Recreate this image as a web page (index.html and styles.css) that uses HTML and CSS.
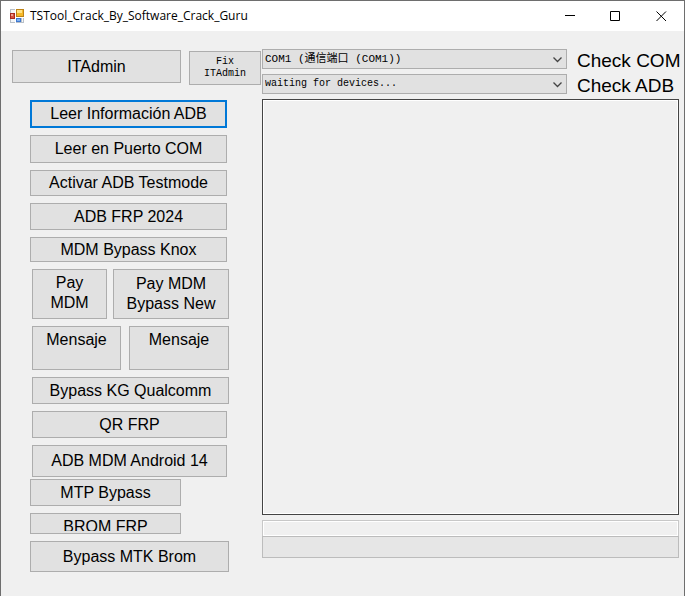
FILE: index.html
```html
<!DOCTYPE html>
<html lang="es">
<head>
<meta charset="utf-8">
<meta name="viewport" content="width=device-width, initial-scale=1">
<title>TSTool_Crack_By_Software_Crack_Guru</title>
<link rel="stylesheet" href="styles.css">
</head>
<body>
<div class="window">
  <header class="titlebar">
    <svg class="app-icon" width="14" height="14" viewBox="0 0 14 14" shape-rendering="crispEdges" aria-hidden="true">
      <rect x="0" y="0" width="14" height="14" fill="#b9c0c8"/>
      <rect x="1" y="1" width="4" height="3" fill="#f4f6f8"/>
      <rect x="1" y="10" width="4" height="3" fill="#f4f6f8"/>
      <rect x="12" y="9" width="1" height="4" fill="#f4f6f8"/>
      <rect x="5" y="0" width="1" height="14" fill="#fff"/>
      <rect x="0" y="4" width="5" height="6" fill="#a82a20"/>
      <rect x="1" y="5" width="3" height="4" fill="#d8503c"/>
      <rect x="1" y="5" width="2" height="2" fill="#eda090"/>
      <rect x="6" y="0" width="8" height="8" fill="#bd8216"/>
      <rect x="7" y="1" width="6" height="6" fill="#f5b929"/>
      <rect x="7" y="1" width="5" height="3" fill="#ffe184"/>
      <rect x="6" y="8" width="8" height="1" fill="#fff"/>
      <rect x="6" y="9" width="5" height="4" fill="#3e78d0"/>
      <rect x="7" y="10" width="3" height="2" fill="#82b2f0"/>
    </svg>
    <h1 class="title">TSTool_Crack_By_Software_Crack_Guru</h1>
    <div class="controls">
      <button class="control" type="button" aria-label="Minimizar"><svg width="11" height="11" viewBox="0 0 11 11"><path d="M1 4.5H11" stroke="#000" fill="none"/></svg></button>
      <button class="control" type="button" aria-label="Maximizar"><svg width="11" height="11" viewBox="0 0 11 11"><path d="M.5.5H9.5V9.5H.5Z" stroke="#000" fill="none"/></svg></button>
      <button class="control" type="button" aria-label="Cerrar"><svg width="11" height="11" viewBox="0 0 11 11"><path d="M.5.5L10 10M10 .5L.5 10" stroke="#000" fill="none"/></svg></button>
    </div>
  </header>
  <main class="content">
    <section class="side">
      <div class="admin">
        <button class="btn h-33 grow" type="button">ITAdmin</button>
        <button class="btn fix" type="button">Fix<br>ITAdmin</button>
      </div>
      <div class="group">
        <button class="btn h-28 focused" type="button">Leer Información ADB</button>
        <button class="btn h-28" type="button">Leer en Puerto COM</button>
        <button class="btn h-26" type="button">Activar ADB Testmode</button>
        <button class="btn h-27" type="button">ADB FRP 2024</button>
        <button class="btn h-25" type="button">MDM Bypass Knox</button>
        <div class="pair pay">
          <button class="btn top" type="button">Pay<br>MDM</button>
          <button class="btn" type="button">Pay MDM<br>Bypass New</button>
        </div>
        <div class="pair messages">
          <button class="btn top" type="button">Mensaje</button>
          <button class="btn top" type="button">Mensaje</button>
        </div>
        <button class="btn h-27 indent wide" type="button">Bypass KG Qualcomm</button>
        <button class="btn h-27 indent" type="button">QR FRP</button>
        <button class="btn h-32 indent" type="button">ADB MDM Android 14</button>
      </div>
      <div class="group brom">
        <button class="btn h-27 short" type="button">MTP Bypass</button>
        <button class="btn h-21 short" type="button"><span class="clip">BROM FRP</span></button>
        <button class="btn h-31 wide" type="button">Bypass MTK Brom</button>
      </div>
    </section>
    <section class="work">
      <div class="ports">
        <div class="combo">
          <select class="select cjk" id="com"><option>COM1 (通信端口 (COM1))</option></select>
          <svg class="chevron" width="9" height="6" viewBox="0 0 9 6" aria-hidden="true"><path d="M.5.5L4.5 4.5L8.5.5" stroke="#444" stroke-width="1.3" fill="none"/></svg>
        </div>
        <label class="check" for="com">Check COM</label>
        <div class="combo">
          <select class="select" id="adb"><option>waiting for devices...</option></select>
          <svg class="chevron" width="9" height="6" viewBox="0 0 9 6" aria-hidden="true"><path d="M.5.5L4.5 4.5L8.5.5" stroke="#444" stroke-width="1.3" fill="none"/></svg>
        </div>
        <label class="check" for="adb">Check ADB</label>
      </div>
      <textarea class="log" aria-label="Registro" readonly></textarea>
      <input class="status" type="text" aria-label="Estado" readonly>
      <div class="progress" role="progressbar" aria-label="Progreso" aria-valuenow="0"></div>
    </section>
  </main>
</div>
</body>
</html>
```

FILE: styles.css
```css
* {
  box-sizing: border-box;
}

body {
  margin: 0;
  background: #f0f0f0;
  color: #000;
  font: 16px/20px "Liberation Sans", Arial, sans-serif;
}

button,
select,
input,
textarea {
  margin: 0;
  border-radius: 0;
  color: inherit;
  font: inherit;
}

.window {
  display: flex;
  flex-direction: column;
  min-height: 100vh;
  border: 1px solid #6e6e6e;
  border-bottom: 0;
}

.titlebar {
  display: flex;
  align-items: center;
  height: 30px;
  padding-left: 9px;
  gap: 6px;
  background: #fff;
}

.title {
  flex: 1;
  margin: 0;
  font: 12px/16px "Open Sans", "Noto Sans", sans-serif;
  white-space: nowrap;
}

.controls {
  display: flex;
}

.control {
  display: flex;
  align-items: center;
  justify-content: center;
  width: 46px;
  height: 30px;
  padding: 0;
  border: 0;
  background: none;
}

.content {
  flex: 1;
  display: grid;
  grid-template-columns: 260px 1fr;
  gap: 1px;
}

.side {
  padding-top: 19px;
}

.admin {
  display: flex;
  align-items: flex-start;
  gap: 8px;
  height: 50px;
  padding-left: 11px;
}

.grow {
  flex: 1;
}

.btn {
  display: flex;
  align-items: center;
  justify-content: center;
  padding: 0;
  border: 1px solid #adadad;
  background: #e1e1e1;
  text-align: center;
  white-space: nowrap;
}

.focused {
  border: 2px solid #0078d7;
}

.fix {
  width: 72px;
  height: 34px;
  margin-top: 1px;
  font: 10px/12px "Liberation Mono", monospace;
}

.group {
  display: flex;
  flex-direction: column;
  gap: 7px;
  margin: 0 34px 0 29px;
}

.brom {
  margin-top: 2px;
}

.h-21 { height: 21px; }
.h-25 { height: 25px; }
.h-26 { height: 26px; }
.h-27 { height: 27px; }
.h-28 { height: 28px; }
.h-31 { height: 31px; }
.h-32 { height: 32px; }
.h-33 { height: 33px; }

.indent {
  margin-left: 2px;
}

.wide {
  margin-right: -2px;
}

.short {
  width: 151px;
}

.top {
  align-items: flex-start;
  padding-top: 3px;
}

.pair {
  display: grid;
  margin: 0 -2px 0 2px;
}

.pay {
  grid-template-columns: 75px 1fr;
  gap: 6px;
  height: 50px;
}

.messages {
  grid-template-columns: 89px 1fr;
  gap: 8px;
  height: 44px;
}

.clip {
  height: 14px;
  overflow: hidden;
}

.work {
  display: flex;
  flex-direction: column;
  padding: 18px 5px 38px 0;
}

.ports {
  display: grid;
  grid-template-columns: 1fr 102px;
  gap: 5px 10px;
  margin-bottom: 5px;
}

.combo {
  position: relative;
  height: 20px;
}

.select {
  display: block;
  width: 100%;
  height: 20px;
  padding: 0 20px 0 2px;
  border: 1px solid #adadad;
  background: #e1e1e1;
  font: 10px/18px "Liberation Mono", "Noto Sans CJK SC", monospace;
  appearance: none;
}

.cjk {
  font-size: 11px;
}

.chevron {
  position: absolute;
  top: 8px;
  right: 5px;
  pointer-events: none;
}

.check {
  font-size: 19px;
  line-height: 24px;
  height: 20px;
  white-space: nowrap;
}

.log {
  flex: 1;
  display: block;
  width: 100%;
  border: 1px solid #444;
  outline: 0;
  background: #f0f0f0;
  box-shadow: inset 0 0 0 1px #fff;
  resize: none;
}

.status {
  width: 100%;
  height: 16px;
  margin-top: 5px;
  border: 1px solid #c8c8c8;
  border-bottom: 0;
  outline: 0;
  background: #f0f0f0;
  box-shadow: inset 0 0 0 1px #fff;
}

.progress {
  height: 22px;
  border: 1px solid #bcbcbc;
  background: #e6e6e6;
}
```
